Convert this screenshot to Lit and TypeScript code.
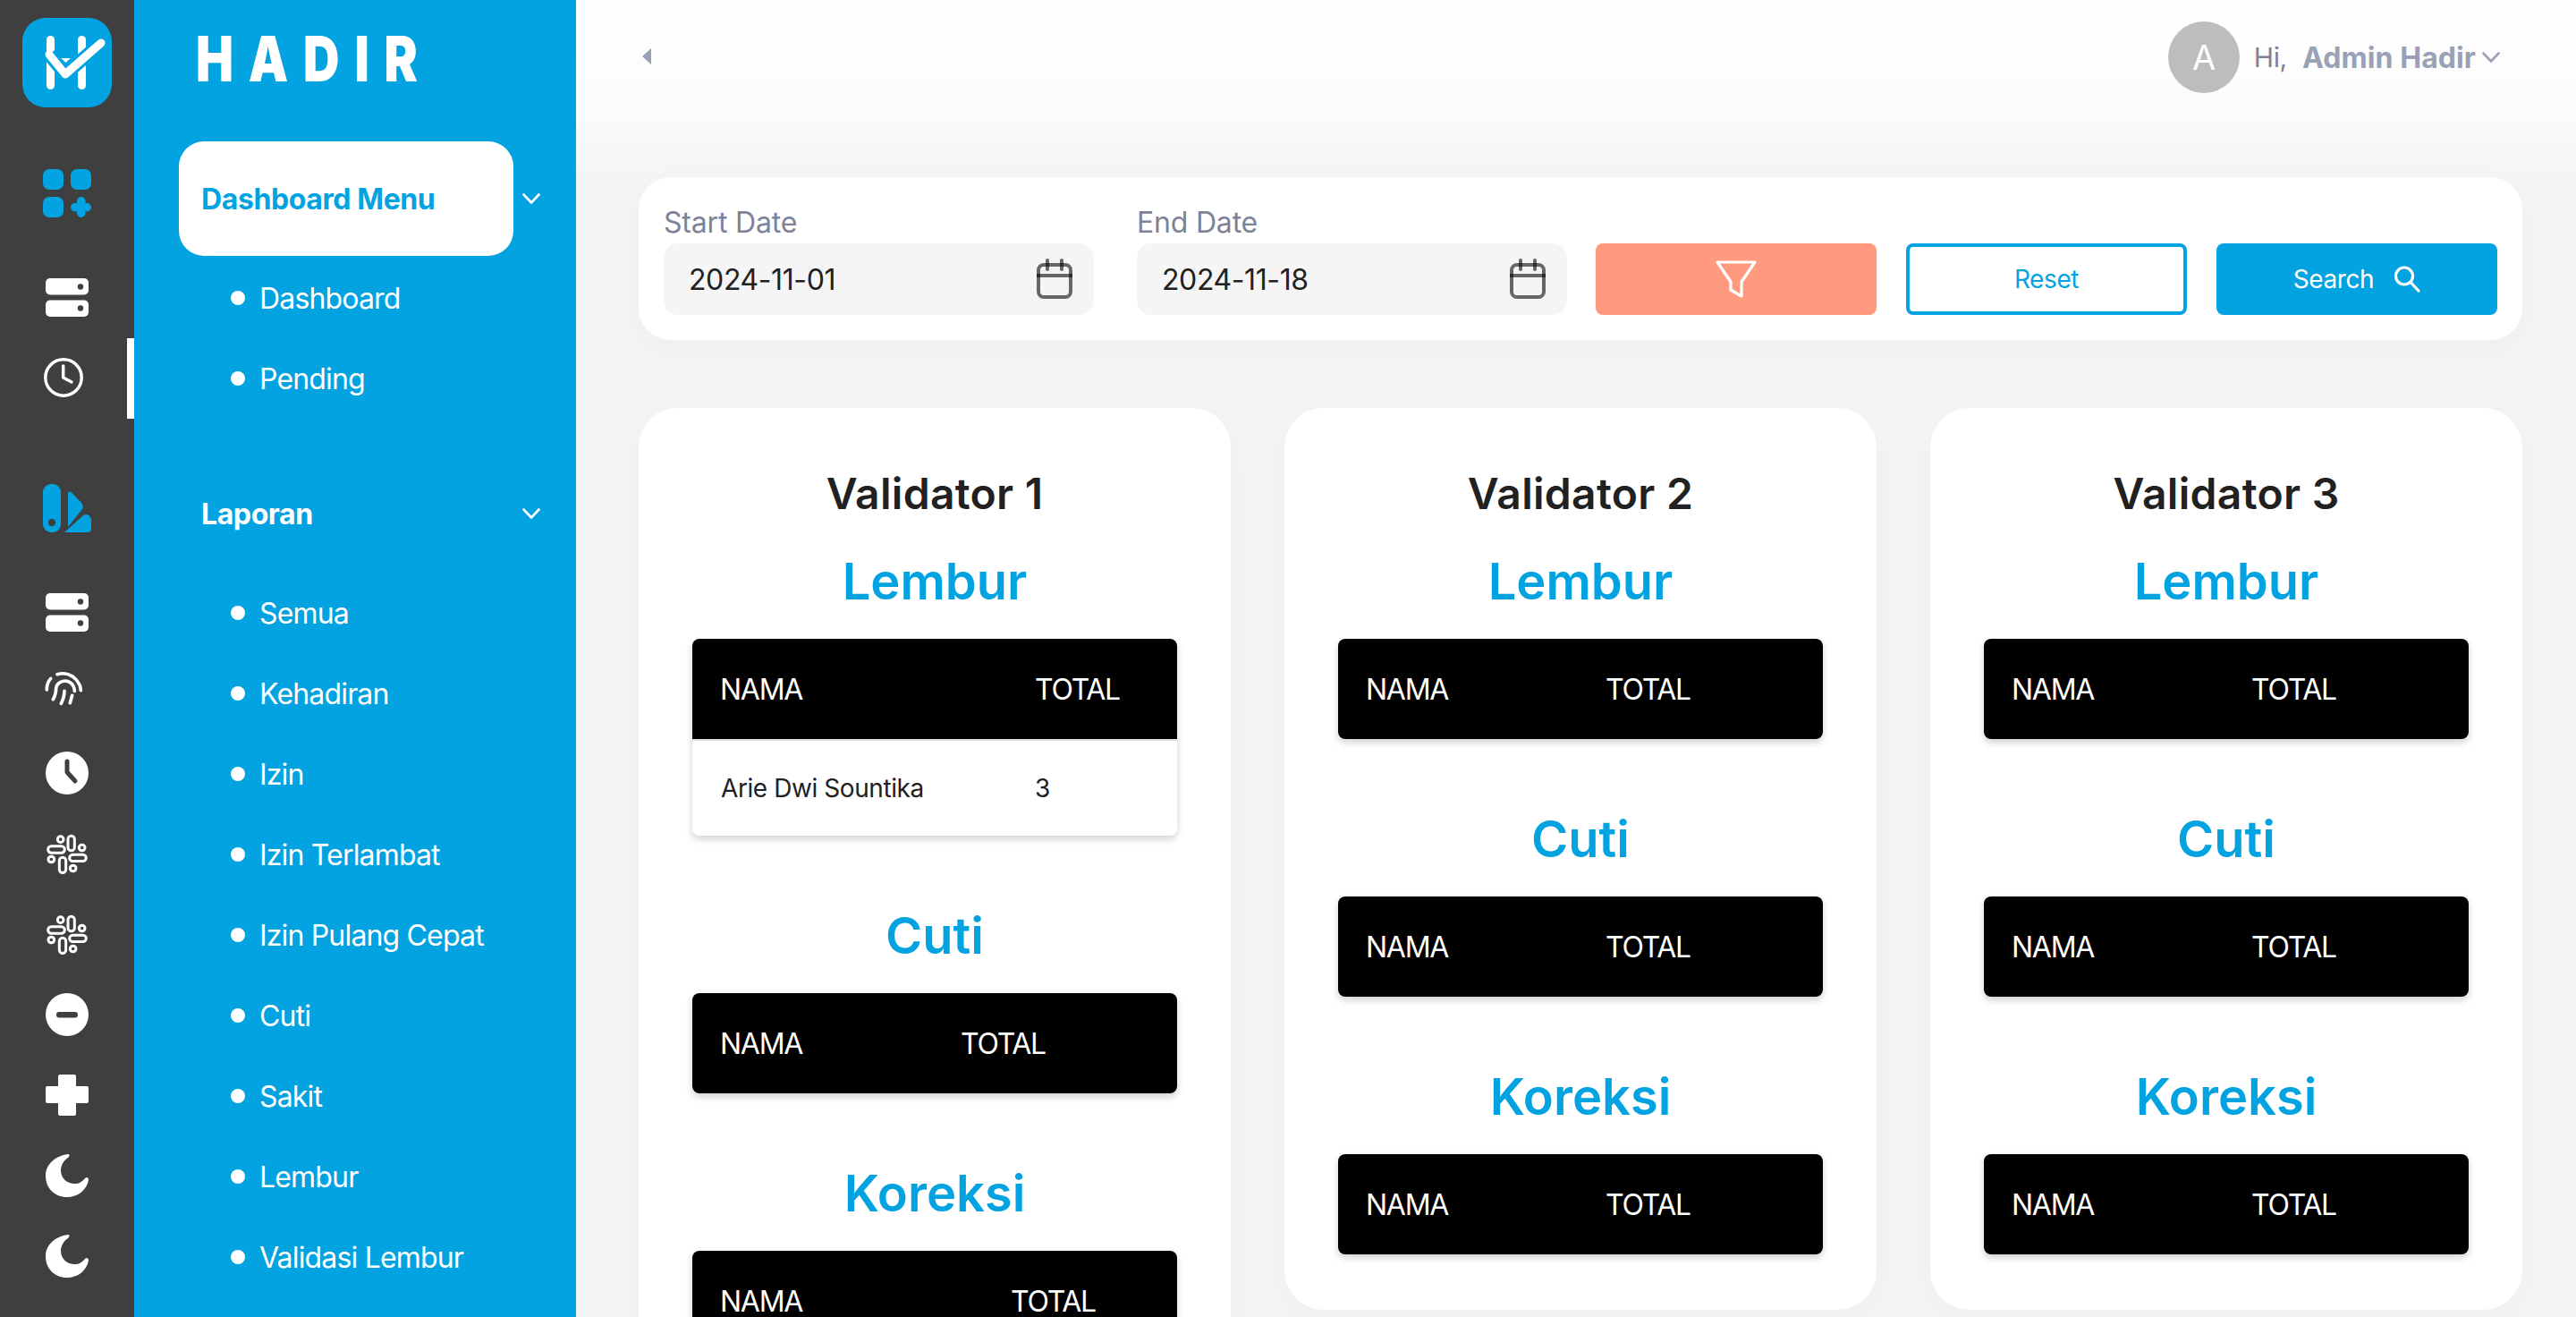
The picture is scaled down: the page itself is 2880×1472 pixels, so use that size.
import { LitElement, html, svg, css, nothing } from 'lit';
import { customElement } from 'lit/decorators.js';
import { styleMap } from 'lit/directives/style-map.js';

const DARK = '#3f3f3f';
const BLUE = '#03a2e1';

const server = svg`<svg width="48" height="43" viewBox="0 0 48 43"><rect width="48" height="18.5" rx="5" fill="#fff"/><rect y="24.5" width="48" height="18.5" rx="5" fill="#fff"/><circle cx="39" cy="9.5" r="3.2" fill="${DARK}"/><circle cx="39" cy="33.5" r="3.2" fill="${DARK}"/></svg>`;

const slack = svg`<svg width="50" height="47" viewBox="30 17 150 140" fill="none" stroke="#fff" stroke-width="9"><circle cx="83" cy="38" r="10"/><rect x="108" y="26" width="22" height="50" rx="11"/><circle cx="155" cy="66" r="10"/><rect x="113" y="89" width="56" height="22" rx="11"/><circle cx="125" cy="135" r="10"/><rect x="79" y="98" width="22" height="52" rx="11"/><circle cx="52" cy="105" r="10"/><rect x="41" y="61" width="56" height="22" rx="11"/></svg>`;

const moon = svg`<svg width="48" height="48" viewBox="0 0 48 48"><path fill="#fff" d="M25 0C10 2 0 12 0 24C0 38 10 48 24 48C36 48 46 40 48 29C48 26 46 25 44 27C40 32 36 33 33 33C24 33 17 27 17 18C17 13 20 7 25 4C27 2 27 0 25 0Z"/></svg>`;

const gridPlus = svg`<svg width="54" height="54" viewBox="0 0 54 54" fill="${BLUE}"><rect width="23" height="23" rx="7"/><rect x="31" width="23" height="23" rx="7"/><rect y="31" width="23" height="23" rx="7"/><rect x="31" y="38" width="23" height="9.5" rx="4.7"/><rect x="38" y="31" width="9.5" height="23" rx="4.7"/></svg>`;

const clockLine = svg`<svg width="52" height="44" viewBox="0 0 52 44" fill="none" stroke="#fff" stroke-width="3.5" stroke-linecap="round" stroke-linejoin="round"><circle cx="22" cy="22" r="20.2"/><path d="M21.7 9V22L31 27"/></svg>`;

const bars = svg`<svg width="54" height="54" viewBox="0 0 54 54" fill="${BLUE}"><rect width="20" height="54" rx="9"/><circle cx="10" cy="43" r="4" fill="${DARK}"/><path d="M28 11Q28 7 32 9.500L43 21Q46 25 44 28L28 48Z"/><path d="M24 54L44 36Q50 31 54 39V50Q54 54 50 54Z"/></svg>`;

const fingerprint = svg`<svg width="70" height="70" viewBox="0 0 210 210" fill="none" stroke="#fff" stroke-width="11" stroke-linecap="round"><path d="M37 96Q36 74 50 58"/><path d="M72 44Q100 36 125 52Q150 72 151 98"/><path d="M58 128Q68 112 68 90Q72 68 100 66Q128 70 130 100"/><path d="M85 142Q96 120 96 100"/><path d="M115 140L122 115"/></svg>`;

const clockFill = svg`<svg width="48" height="48" viewBox="0 0 48 48"><circle cx="24" cy="24" r="24" fill="#fff"/><path d="M24 11V23L33 33" fill="none" stroke="${DARK}" stroke-width="5" stroke-linecap="round" stroke-linejoin="round"/></svg>`;

const minus = svg`<svg width="48" height="48" viewBox="0 0 48 48"><circle cx="24" cy="24" r="24" fill="#fff"/><rect x="12" y="21" width="24" height="6.500" rx="3.200" fill="${DARK}"/></svg>`;

const cross = svg`<svg width="48" height="46" viewBox="0 0 48 46" fill="#fff"><rect x="14" width="20" height="46" rx="2"/><rect y="13" width="48" height="19" rx="2"/></svg>`;

const chevron = svg`<svg width="20" height="12" viewBox="0 0 20 12" fill="none" stroke="currentColor" stroke-width="2.600" stroke-linecap="round" stroke-linejoin="round"><path d="M1.500 1.500L10 10.500L18.500 1.500"/></svg>`;

const calendar = svg`<svg width="48" height="48" viewBox="0 0 48 48" fill="none" stroke="#000" stroke-opacity=".58" stroke-width="4" stroke-linecap="round"><rect x="6" y="8" width="36" height="36" rx="6"/><path d="M4 20H44" stroke-linecap="butt"/><path d="M16 3V13M32 3V13"/></svg>`;

const rail = [
  { icon: gridPlus, cls: 'first' },
  { icon: server, cls: 'next' },
  { icon: clockLine, cls: 'active' },
  { icon: bars, cls: 'section' },
  { icon: server, cls: 'next' },
  { icon: fingerprint },
  { icon: clockFill },
  { icon: slack },
  { icon: slack },
  { icon: minus },
  { icon: cross },
  { icon: moon },
  { icon: moon },
];

const menus = [
  { title: 'Dashboard Menu', selected: true, items: ['Dashboard', 'Pending'] },
  {
    title: 'Laporan',
    selected: false,
    items: ['Semua', 'Kehadiran', 'Izin', 'Izin Terlambat', 'Izin Pulang Cepat', 'Cuti', 'Sakit', 'Lembur', 'Validasi Lembur'],
  },
];

interface Block {
  title: string;
  nameWidth: number;
  rows?: [string, string][];
}

const validators: { name: string; blocks: Block[] }[] = [
  {
    name: 'Validator 1',
    blocks: [
      { title: 'Lembur', nameWidth: 383, rows: [['Arie Dwi Sountika', '3']] },
      { title: 'Cuti', nameWidth: 300 },
      { title: 'Koreksi', nameWidth: 356 },
    ],
  },
  {
    name: 'Validator 2',
    blocks: [
      { title: 'Lembur', nameWidth: 299 },
      { title: 'Cuti', nameWidth: 299 },
      { title: 'Koreksi', nameWidth: 299 },
    ],
  },
  {
    name: 'Validator 3',
    blocks: [
      { title: 'Lembur', nameWidth: 299 },
      { title: 'Cuti', nameWidth: 299 },
      { title: 'Koreksi', nameWidth: 299 },
    ],
  },
];

@customElement('app-root')
export class AppRoot extends LitElement {
  static styles = css`
    :host {
      display: flex;
      width: 2880px;
      height: 1472px;
      overflow: hidden;
      font-family: Inter, 'Liberation Sans', sans-serif;
      letter-spacing: -0.025em;
      color: #212121;
    }
    * { box-sizing: border-box; }

    /* icon rail */
    .rail {
      flex: 0 0 150px;
      background: #3f3f3f;
      display: flex;
      flex-direction: column;
      align-items: stretch;
      padding-top: 20px;
    }
    .tile {
      flex: none;
      width: 100px;
      height: 100px;
      margin-left: 25px;
      border-radius: 26px;
      background: #03a2e1;
    }
    .tile svg { display: block; }
    .slot {
      position: relative;
      flex: none;
      height: 90px;
      display: flex;
      align-items: center;
      justify-content: center;
    }
    .slot.first { margin-top: 51px; }
    .slot.next { margin-top: 26px; }
    .slot.section { margin-top: 56px; }
    .slot.active::after {
      content: '';
      position: absolute;
      right: 0;
      top: 1px;
      width: 8px;
      height: 90px;
      background: #fff;
    }

    /* menu column */
    .side {
      flex: 0 0 494px;
      background: #03a2e1;
      color: #fff;
      display: flex;
      flex-direction: column;
    }
    .brand {
      flex: none;
      height: 158px;
      padding: 26px 0 0 69px;
      font-size: 70px;
      line-height: 80px;
      font-weight: 900;
    }
    .brand span {
      display: inline-block;
      transform: scaleX(0.8);
      transform-origin: left center;
      letter-spacing: 21px;
    }
    .group { flex: none; margin-bottom: 42px; }
    .head {
      display: flex;
      align-items: center;
      height: 128px;
      margin: 0 70px 2px 50px;
      padding-left: 25px;
      font-size: 32px;
      font-weight: 700;
      position: relative;
    }
    .head.on {
      background: #fff;
      color: #03a2e1;
      border-radius: 28px;
    }
    .head svg {
      position: absolute;
      left: 384px;
      top: 58px;
      color: #fff;
    }
    .item {
      display: flex;
      align-items: center;
      height: 90px;
      padding-left: 108px;
      font-size: 32px;
      letter-spacing: -0.026em;
    }
    .dot {
      width: 16px;
      height: 16px;
      border-radius: 50%;
      background: #fff;
      margin-right: 16px;
    }

    /* main */
    .main {
      flex: 1;
      min-width: 0;
      padding: 0 60px 0 70px;
      background: linear-gradient(180deg, #fdfefd 0, #fbfcfb 110px, #f3f5f5 205px);
    }
    .top {
      height: 128px;
      display: flex;
      align-items: center;
    }
    .collapse {
      width: 0;
      height: 0;
      margin-left: 4px;
      margin-top: -2px;
      border-style: solid;
      border-width: 9.500px 10px 9.500px 0;
      border-color: transparent #99a1b7 transparent transparent;
    }
    .user {
      margin-left: auto;
      margin-right: 25px;
      display: flex;
      align-items: center;
      font-size: 30px;
      color: #7e8299;
    }
    .avatar {
      width: 80px;
      height: 80px;
      border-radius: 50%;
      background: #bdbdbd;
      color: #fff;
      font-size: 38px;
      display: flex;
      align-items: center;
      justify-content: center;
      margin-right: 16px;
    }
    .user b {
      margin-left: 17px;
      margin-right: 7px;
      color: #99a1b7;
      font-size: 32px;
      font-weight: 700;
      letter-spacing: 0.003em;
    }
    .user svg { color: #99a1b7; }

    .filter {
      margin-top: 70px;
      height: 182px;
      background: #fff;
      border-radius: 36px;
      box-shadow: 0 10px 40px rgba(0, 0, 0, 0.025);
      padding: 28px;
      display: flex;
      align-items: flex-end;
    }
    .field { width: 481px; }
    .field + .field { margin-left: 48px; }
    .field label {
      display: block;
      font-size: 32px;
      line-height: 44px;
      letter-spacing: -0.006em;
      color: #7e8299;
      margin-bottom: 1px;
    }
    .date {
      height: 80px;
      border-radius: 16px;
      background: #f5f5f5;
      display: flex;
      align-items: center;
      justify-content: space-between;
      padding: 0 20px 0 28px;
      font-size: 32px;
    }
    .btn {
      width: 314px;
      height: 80px;
      margin-left: 33px;
      border-radius: 8px;
      font-family: inherit;
      letter-spacing: inherit;
      font-size: 28px;
      display: flex;
      align-items: center;
      justify-content: center;
      border: 0;
    }
    .btn.funnel { background: #ff9a7f; margin-left: 32px; }
    .btn.reset { background: #fff; color: #03a2e1; border: 4px solid #03a2e1; }
    .btn.search { background: #03a2e1; color: #fff; gap: 22px; }

    .cards {
      margin-top: 76px;
      display: grid;
      grid-template-columns: repeat(3, 1fr);
      gap: 60px;
      align-items: start;
    }
    .card {
      background: #fff;
      border-radius: 44px;
      box-shadow: 0 10px 40px rgba(0, 0, 0, 0.025);
      padding: 64px 60px 62px;
    }
    .card h2 {
      margin: 0 0 30px;
      text-align: center;
      font-size: 48px;
      line-height: 64px;
      font-weight: 600;
      letter-spacing: 0.006em;
    }
    .block + .block { margin-top: 76px; }
    .block h3 {
      margin: 0 0 28px;
      text-align: center;
      color: #03a2e1;
      font-size: 56px;
      line-height: 72px;
      font-weight: 600;
      letter-spacing: 0;
    }
    table {
      width: 100%;
      table-layout: fixed;
      border-collapse: separate;
      border-spacing: 0;
      border-radius: 8px;
      box-shadow: 0 4px 8px rgba(0, 0, 0, 0.18);
      overflow: hidden;
    }
    th {
      height: 112px;
      background: #000;
      color: #fff;
      text-align: left;
      font-weight: 400;
      font-size: 32px;
      letter-spacing: -0.04em;
      padding: 0 0 0 31px;
    }
    td {
      height: 108px;
      border-top: 2px solid #e0e0e0;
      background: #fff;
      font-size: 28px;
      letter-spacing: -0.015em;
      padding: 0 0 0 32px;
    }
    th + th, td + td { padding-left: 0; }
  `;

  private renderTable(block: Block) {
    return html`
      <table>
        <colgroup>
          <col style=${styleMap({ width: `${block.nameWidth}px` })} />
          <col />
        </colgroup>
        <thead>
          <tr><th>NAMA</th><th>TOTAL</th></tr>
        </thead>
        ${block.rows
          ? html`<tbody>
              ${block.rows.map((r) => html`<tr><td>${r[0]}</td><td>${r[1]}</td></tr>`)}
            </tbody>`
          : nothing}
      </table>
    `;
  }

  render() {
    return html`
      <nav class="rail">
        <div class="tile">
          <svg width="100" height="100" viewBox="0 0 100 100">
            <rect x="27" y="20" width="9" height="60" rx="4.500" fill="#fff" />
            <rect x="62" y="20" width="9" height="60" rx="4.500" fill="#fff" />
            <path d="M43 45H54L48.500 50Z" fill="#fff" />
            <path d="M30 41L48 63L88 28" fill="none" stroke="#03a2e1" stroke-width="15" stroke-linejoin="round" />
            <path d="M30 41L48 63L88 28" fill="none" stroke="#fff" stroke-width="9" stroke-linecap="round" stroke-linejoin="round" />
          </svg>
        </div>
        ${rail.map((r) => html`<div class="slot ${r.cls ?? ''}">${r.icon}</div>`)}
      </nav>

      <aside class="side">
        <div class="brand"><span>HADIR</span></div>
        ${menus.map(
          (m) => html`
            <div class="group">
              <div class="head ${m.selected ? 'on' : ''}">${m.title}${chevron}</div>
              ${m.items.map((i) => html`<div class="item"><span class="dot"></span>${i}</div>`)}
            </div>
          `,
        )}
      </aside>

      <main class="main">
        <header class="top">
          <span class="collapse"></span>
          <div class="user">
            <span class="avatar">A</span>
            Hi,<b>Admin Hadir</b>${chevron}
          </div>
        </header>

        <section class="filter">
          <div class="field">
            <label>Start Date</label>
            <div class="date">2024-11-01${calendar}</div>
          </div>
          <div class="field">
            <label>End Date</label>
            <div class="date">2024-11-18${calendar}</div>
          </div>
          <button class="btn funnel">
            <svg width="46" height="42" viewBox="0 0 46 42" fill="none" stroke="#fff" stroke-width="3.200" stroke-linejoin="round">
              <path d="M2 2H44L29 24V40L17 33V24Z" />
            </svg>
          </button>
          <button class="btn reset">Reset</button>
          <button class="btn search">
            Search
            <svg width="30" height="30" viewBox="0 0 30 30" fill="none" stroke="#fff" stroke-width="3.200" stroke-linecap="round">
              <circle cx="12" cy="11.500" r="9.500" />
              <path d="M19 18.500L28 28" />
            </svg>
          </button>
        </section>

        <section class="cards">
          ${validators.map(
            (v) => html`
              <article class="card">
                <h2>${v.name}</h2>
                ${v.blocks.map(
                  (b) => html`
                    <div class="block">
                      <h3>${b.title}</h3>
                      ${this.renderTable(b)}
                    </div>
                  `,
                )}
              </article>
            `,
          )}
        </section>
      </main>
    `;
  }
}
